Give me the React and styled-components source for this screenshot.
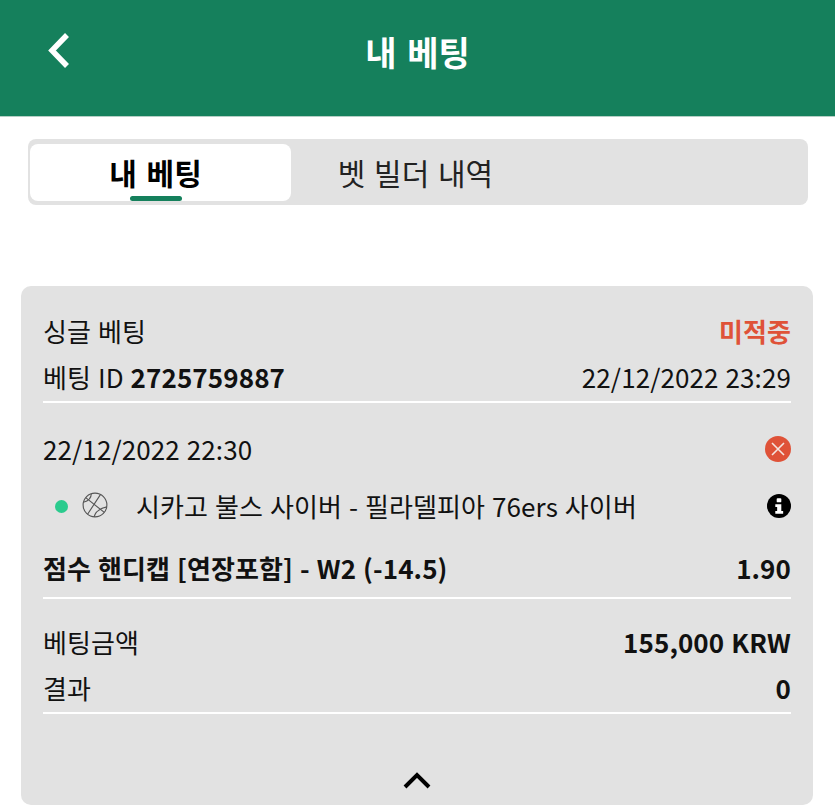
import React from "react";
import styled, { createGlobalStyle } from "styled-components";

const Global = createGlobalStyle`
  html, body {
    margin: 0;
    padding: 0;
    background: #fff;
    font-family: "Noto Sans CJK KR", "Noto Sans", sans-serif;
    color: #111;
  }
`;

const Page = styled.div`
  width: 835px;
  height: 805px;
  overflow: hidden;
`;

const Header = styled.header`
  height: 116px;
  background: #15805c;
  border-bottom: 1px solid #b5cfc5;
  display: flex;
  align-items: center;
  justify-content: center;
  position: relative;
`;

const BackIcon = styled.svg`
  position: absolute;
  left: 46px;
  top: 32px;
  width: 28px;
  height: 38px;
`;

const Title = styled.h1`
  margin: 0 0 12px;
  color: #fff;
  font-size: 34px;
  font-weight: 700;
  line-height: 44px;
  word-spacing: 3px;
`;

const TabBar = styled.div`
  margin: 22px 27px 0 28px;
  height: 66px;
  box-sizing: border-box;
  padding: 5px 2px 4px;
  background: #e2e2e2;
  border-radius: 8px;
  display: flex;
`;

const Tab = styled.div`
  width: 261px;
  box-sizing: border-box;
  padding: 0 ${(p) => (p.$active ? 10 : 12)}px 2px 0;
  display: flex;
  align-items: center;
  justify-content: center;
  position: relative;
  border-radius: 8px;
  font-size: 30px;
  line-height: 40px;
  word-spacing: ${(p) => (p.$active ? 3 : 2)}px;
  font-weight: ${(p) => (p.$active ? 700 : 400)};
  background: ${(p) => (p.$active ? "#fff" : "transparent")};
  color: ${(p) => (p.$active ? "#000" : "#222")};
`;

const TabMark = styled.span`
  position: absolute;
  left: 100px;
  bottom: 0;
  width: 52px;
  height: 5px;
  border-radius: 3px;
  background: #15805c;
`;

const Card = styled.section`
  margin: 81px 22px 0 21px;
  height: 519px;
  box-sizing: border-box;
  padding: 24px 22px 0;
  background: #e2e2e2;
  border-radius: 10px;
  display: flex;
  flex-direction: column;
  font-size: 26px;
  letter-spacing: 0.1px;
  word-spacing: 1px;
`;

const Row = styled.div`
  display: flex;
  align-items: center;
  justify-content: space-between;
  box-sizing: border-box;
  height: ${(p) => p.$h || 46}px;
  padding-bottom: 4px;
  line-height: 36px;
  white-space: nowrap;
`;

const Strong = styled.b`
  font-weight: 700;
`;

const Lost = styled.span`
  color: #df5238;
  font-weight: 700;
`;

const Divider = styled.div`
  height: 2px;
  background: #fff;
  margin-bottom: ${(p) => p.$after || 0}px;
`;

const Match = styled.div`
  display: flex;
  align-items: center;
`;

const Dot = styled.span`
  width: 13px;
  height: 13px;
  margin-left: 12px;
  border-radius: 50%;
  background: #2bcb8e;
`;

const Ball = styled.svg`
  width: 26px;
  height: 26px;
  margin: 0 28px 2px 14px;
`;

const Toggle = styled.div`
  display: flex;
  justify-content: center;
  margin-top: 56px;
`;

const StatusIcon = styled.svg`
  width: ${(p) => p.$size}px;
  height: ${(p) => p.$size}px;
`;

const App = () => {
  return (
    <Page>
      <Global />
      <Header>
        <BackIcon viewBox="0 0 28 38">
          <path d="M21 3 L6 18.5 L21 34" fill="none" stroke="#fff" strokeWidth="5.5" />
        </BackIcon>
        <Title>내 베팅</Title>
      </Header>
      <TabBar>
        <Tab $active>
          내 베팅
          <TabMark />
        </Tab>
        <Tab>벳 빌더 내역</Tab>
      </TabBar>
      <Card>
        <Row>
          <span>싱글 베팅</span>
          <Lost>미적중</Lost>
        </Row>
        <Row $h={45}>
          <span>
            베팅 ID <Strong>2725759887</Strong>
          </span>
          <span>22/12/2022 23:29</span>
        </Row>
        <Divider $after={25} />
        <Row>
          <span>22/12/2022 22:30</span>
          <StatusIcon $size={26} viewBox="0 0 26 26">
            <circle cx="13" cy="13" r="13" fill="#df5238" />
            <path d="M7 7 L19 19 M19 7 L7 19" stroke="#f4e4df" strokeWidth="1.6" />
          </StatusIcon>
        </Row>
        <Row $h={68}>
          <Match>
            <Dot />
            <Ball viewBox="0 0 28 28">
              <g fill="none" stroke="#555" strokeWidth="1.2">
                <circle cx="14" cy="14" r="12.8" />
                <path d="M4 6 L24 22 M20 2.5 L6 24" />
                <path d="M10 1.8 C10 6 7 9.5 1.5 11" />
                <path d="M13 26.8 C14.5 21 20 17.5 26.8 16" />
              </g>
            </Ball>
            <span>시카고 불스 사이버 - 필라델피아 76ers 사이버</span>
          </Match>
          <StatusIcon $size={24} viewBox="0 0 26 26">
            <circle cx="13" cy="13" r="13" fill="#000" />
            <rect x="10.5" y="4.5" width="5" height="4.5" rx="1" fill="#fff" />
            <path d="M9 11 H15.5 V18.5 H17.5 V21.5 H9 V18.5 H11 V14 H9 Z" fill="#fff" />
          </StatusIcon>
        </Row>
        <Row $h={55}>
          <Strong>점수 핸디캡 [연장포함] - W2 (-14.5)</Strong>
          <Strong>1.90</Strong>
        </Row>
        <Divider $after={22} />
        <Row>
          <span>베팅금액</span>
          <Strong>155,000 KRW</Strong>
        </Row>
        <Row $h={45}>
          <span>결과</span>
          <Strong>0</Strong>
        </Row>
        <Divider />
        <Toggle>
          <svg width="30" height="20" viewBox="0 0 30 20">
            <path d="M3 17 L15 5 L27 17" fill="none" stroke="#000" strokeWidth="4" />
          </svg>
        </Toggle>
      </Card>
    </Page>
  );
};

export default App;
